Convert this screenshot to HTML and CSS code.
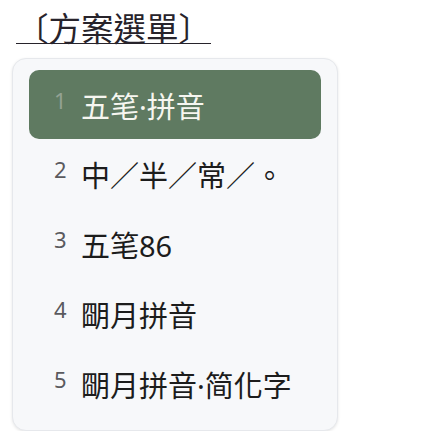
FILE: index.html
```html
<!DOCTYPE html>
<html lang="zh-Hant">
<head>
<meta charset="utf-8">
<title>方案選單</title>
<link rel="stylesheet" href="styles.css">
</head>
<body>
<div class="page">
  <h1 class="title">〔方案選單〕</h1>
  <ul class="menu">
    <li class="item active"><span class="line"><span class="num">1</span><span class="cand">五笔·拼音</span></span></li>
    <li class="item"><span class="line"><span class="num">2</span><span class="cand">中／半／常／。</span></span></li>
    <li class="item"><span class="line"><span class="num">3</span><span class="cand">五笔86</span></span></li>
    <li class="item"><span class="line"><span class="num">4</span><span class="cand">朙月拼音</span></span></li>
    <li class="item"><span class="line"><span class="num">5</span><span class="cand">朙月拼音·简化字</span></span></li>
  </ul>
</div>
</body>
</html>
```

FILE: styles.css
```css
html, body {
  margin: 0;
  padding: 0;
  background: #ffffff;
}

body {
  font-family: "Noto Sans", "Noto Sans CJK SC", "Noto Sans CJK TC", sans-serif;
  color: #1c1c1c;
}

.page {
  padding: 10px 0 0 0;
}

.title {
  display: inline-block;
  margin: 0 0 0 16px;
  font-family: "Noto Sans CJK TC", "Noto Sans CJK SC", sans-serif;
  font-weight: 400;
  font-size: 32.5px;
  line-height: 33px;
  color: #27232b;
  border-bottom: 1.5px solid #27232b;
}

.menu {
  list-style: none;
  box-sizing: border-box;
  width: 326px;
  margin: 12px 0 0 12px;
  padding: 11px 16px;
  background: #f7f8fa;
  border: 1px solid #e6e8ec;
  border-radius: 14px;
  box-shadow: 0 1px 3px rgba(0, 0, 0, 0.10);
}

.item {
  display: flex;
  align-items: center;
  height: 70px;
  padding-left: 25px;
  padding-top: 4px;
  box-sizing: border-box;
  border-radius: 10px;
}

.item.active {
  height: 69px;
  background: #5f7a61;
}

.line {
  display: block;
  font-size: 29px;
  line-height: 36px;
  white-space: nowrap;
}

.num {
  display: inline-block;
  width: 27px;
  font-size: 22px;
  line-height: 22px;
  vertical-align: 9px;
  color: #5a5a5e;
}

.cand {
  color: #1c1c1c;
}

.active .num {
  color: #93a293;
}

.active .cand {
  color: #f6f6f0;
}
```
